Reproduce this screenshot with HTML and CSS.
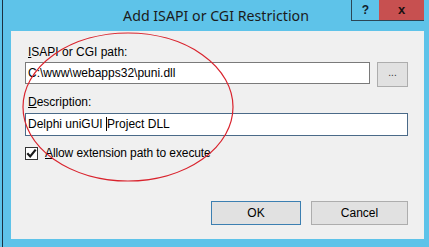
FILE: index.html
```html
<!DOCTYPE html>
<html>
<head>
<meta charset="utf-8">
<link rel="stylesheet" href="styles.css">
</head>
<body>
<div class="frame">
  <div class="titlebar">
    <span></span>
    <div class="title">Add ISAPI or CGI Restriction</div>
    <div class="caption-btns">
      <div class="cap-help">?</div>
      <div class="cap-close">x</div>
    </div>
  </div>
  <div class="client">
    <div class="label"><u>I</u>SAPI or CGI path:</div>
    <div class="row">
      <div class="textbox tb-path">C:\www\webapps32\puni.dll</div>
      <div class="browse">...</div>
    </div>
    <div class="label label-desc"><u>D</u>escription:</div>
    <div class="textbox tb-desc">Delphi uniGUI <span class="caret"></span>Project DLL</div>
    <div class="check-row">
      <div class="checkbox">
        <svg width="11" height="11" viewBox="0 0 11 11"><path d="M1.3 5.3 L4.2 8.4 L9.7 1.6" fill="none" stroke="#1a1a1a" stroke-width="2.2"/></svg>
      </div>
      <div class="check-label"><u>A</u>llow extension path to execute</div>
    </div>
    <div class="buttons">
      <div class="btn btn-default">OK</div>
      <div class="btn">Cancel</div>
    </div>
  </div>
  <svg class="annot" width="429" height="247" viewBox="0 0 429 247"><ellipse cx="128" cy="107" rx="105" ry="74" fill="none" stroke="#d9232d" stroke-width="1.2"/></svg>
</div>
</body>
</html>
```
FILE: styles.css
```css
html, body {
  margin: 0;
  padding: 0;
  width: 429px;
  height: 247px;
  overflow: hidden;
  background: #5ec3e9;
  font-family: "Liberation Sans", Arial, sans-serif;
}
.frame {
  position: relative;
  margin-left: 2px;
  height: 247px;
  border-left: 1px solid #1c3040;
  display: flex;
  flex-direction: column;
}
.titlebar {
  height: 31px;
  display: grid;
  grid-template-columns: 1fr auto 1fr;
  align-items: start;
}
.title {
  font-family: "Noto Sans", sans-serif;
  font-size: 14.2px;
  color: #1b1b1b;
  padding-top: 6px;
  line-height: 20px;
}
.caption-btns {
  justify-self: end;
  display: flex;
  margin-right: 5px;
}
.cap-help {
  width: 27px;
  height: 20px;
  border-left: 1px solid #2b4656;
  border-bottom: 1px solid #2b4656;
  text-align: center;
  font-weight: bold;
  font-size: 12px;
  line-height: 20px;
  color: #10202c;
}
.cap-close {
  width: 45px;
  height: 20px;
  background: #c75050;
  border-bottom: 1px solid #2b4656;
  text-align: center;
  font-weight: bold;
  font-size: 13px;
  line-height: 19px;
  color: #1a1010;
}
.client {
  flex: 1;
  margin: 0 5px 8px 8px;
  background: #f0f0f0;
  padding: 14px 16px 0 14px;
  font-size: 12px;
  color: #000;
}
.label {
  padding-left: 3px;
  line-height: 15px;
  height: 17px;
}
.row {
  display: flex;
  gap: 7px;
  align-items: flex-start;
}
.textbox {
  box-sizing: border-box;
  background: #fff;
  border: 1px solid #7a7a7a;
  padding-left: 2px;
  line-height: 20px;
}
.tb-path {
  flex: 1;
  height: 22px;
}
.browse {
  box-sizing: border-box;
  width: 31px;
  height: 25px;
  background: #e1e1e1;
  border: 1px solid #adadad;
  text-align: center;
  font-size: 10px;
  line-height: 20px;
  color: #333;
}
.label-desc {
  margin-top: 8px;
  height: 18px;
}
.tb-desc {
  height: 23px;
  border-color: #4a6a88;
  line-height: 21px;
}
.caret {
  display: inline-block;
  width: 1px;
  height: 14px;
  background: #000;
  vertical-align: -3px;
}
.check-row {
  display: flex;
  align-items: center;
  margin-top: 10px;
  gap: 7px;
}
.checkbox {
  box-sizing: border-box;
  width: 13px;
  height: 13px;
  border: 1px solid #333;
  background: #fff;
  display: flex;
  align-items: center;
  justify-content: center;
}
.check-label {
  line-height: 15px;
  letter-spacing: -0.1px;
}
.buttons {
  display: flex;
  justify-content: flex-end;
  gap: 10px;
  margin-top: 40px;
}
.btn {
  box-sizing: border-box;
  width: 97px;
  height: 24px;
  background: #e1e1e1;
  border: 1px solid #adadad;
  text-align: center;
  line-height: 22px;
}
.btn-default {
  width: 90px;
  border-color: #3c7fb1;
}
.annot {
  position: absolute;
  left: -3px;
  top: 0;
  pointer-events: none;
}
```
